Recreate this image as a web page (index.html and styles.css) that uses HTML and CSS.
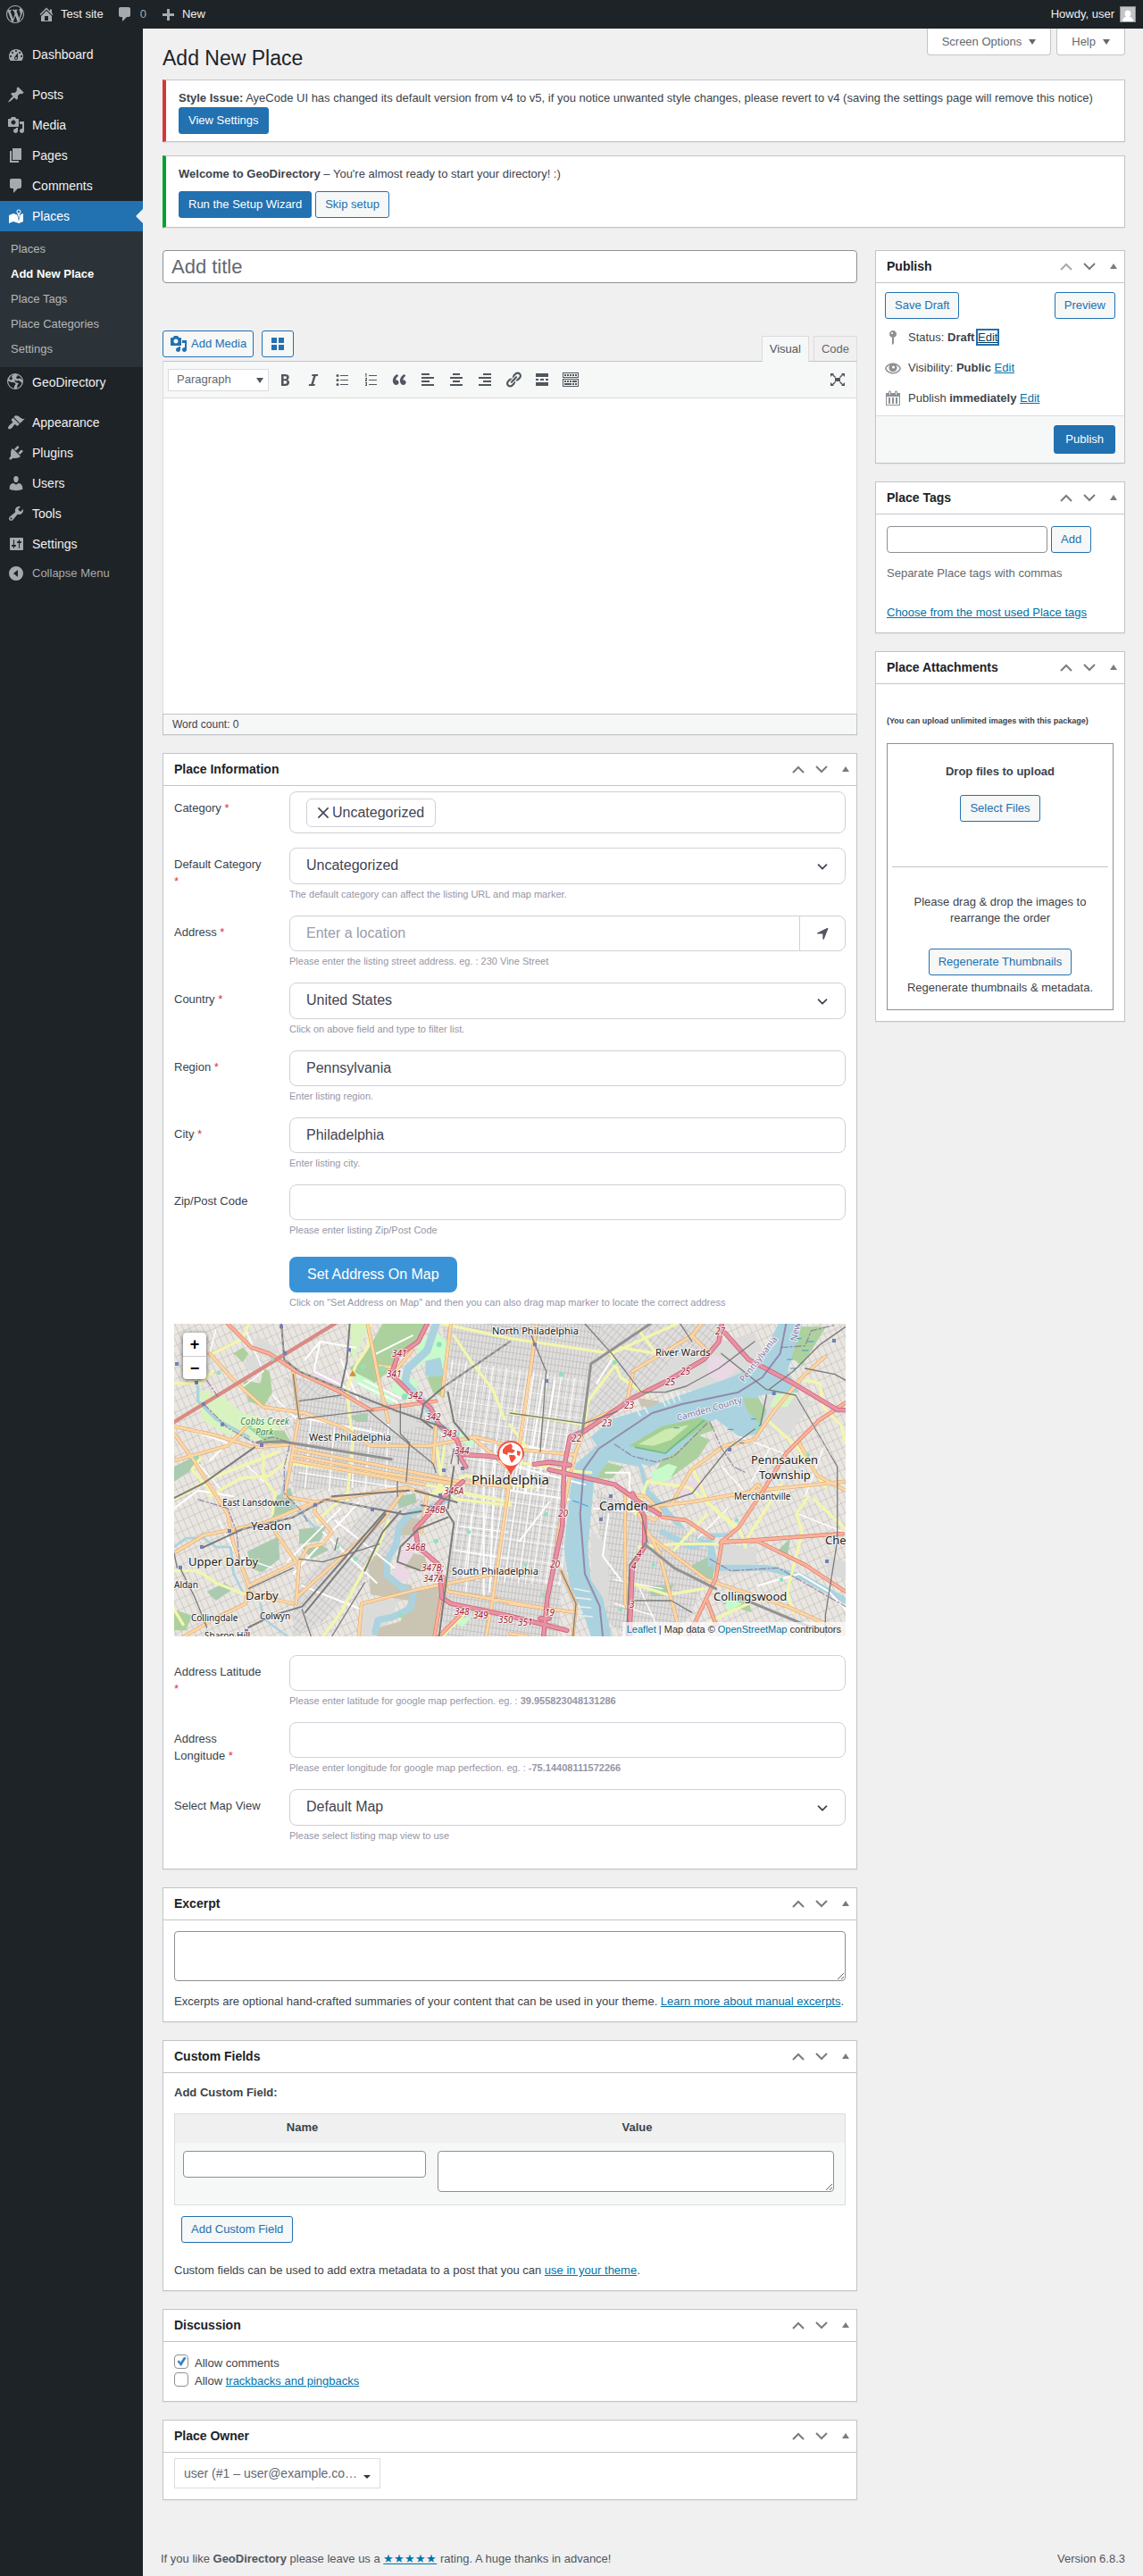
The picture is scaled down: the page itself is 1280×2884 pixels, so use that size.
FILE: index.html
```html
<!DOCTYPE html>
<html lang="en">
<head>
    <meta charset="UTF-8">
    <meta name="viewport" content="width=device-width, initial-scale=1.0">
    <title>Add New Place</title>
    <link rel="stylesheet" href="styles.css">
</head>
<body>
    <!-- Icon set -->
    <svg class="sprite" aria-hidden="true">
        <symbol id="i-wp" viewBox="0 0 20 20"><path d="M20 10c0-5.51-4.49-10-10-10C4.48 0 0 4.49 0 10c0 5.52 4.48 10 10 10 5.51 0 10-4.48 10-10zM7.78 15.37L4.37 6.22c.55-.02 1.17-.08 1.17-.08.5-.06.44-1.13-.06-1.11 0 0-1.45.11-2.37.11-.18 0-.37 0-.58-.01C4.12 2.69 6.87 1.11 10 1.11c2.33 0 4.45.87 6.05 2.34-.68-.11-1.65.39-1.65 1.58 0 .74.45 1.36.9 2.1.35.61.55 1.36.55 2.46 0 1.49-1.4 5-1.4 5l-3.03-8.37c.54-.02.82-.17.82-.17.5-.05.44-1.25-.06-1.22 0 0-1.44.12-2.38.12-.87 0-2.33-.12-2.33-.12-.5-.03-.56 1.2-.06 1.22l.92.08 1.26 3.41zM17.41 10c.24-.64.74-1.87.43-4.25.7 1.29 1.05 2.71 1.05 4.25 0 3.29-1.73 6.24-4.4 7.78.97-2.59 1.94-5.2 2.92-7.78zM6.1 18.09C3.12 16.65 1.11 13.53 1.11 10c0-1.3.23-2.48.72-3.59C3.25 10.3 4.67 14.2 6.1 18.09zm4.03-6.63l2.58 6.98c-.86.29-1.76.45-2.71.45-.79 0-1.57-.11-2.29-.33.81-2.38 1.62-4.74 2.42-7.1z"/></symbol>
        <symbol id="i-home" viewBox="0 0 20 20"><path d="M16 8.5l1.53 1.53-1.06 1.06L10 4.6l-6.47 6.49-1.06-1.06L10 2.5l4 4v-2h2v4zm-6-2.46l6 5.99V18H4v-5.97zM12 17v-5H8v5h4z"/></symbol>
        <symbol id="i-comment" viewBox="0 0 20 20"><path d="M5 2h9c1.1 0 2 .9 2 2v7c0 1.1-.9 2-2 2h-2l-5 5v-5H5c-1.1 0-2-.9-2-2V4c0-1.1.9-2 2-2z"/></symbol>
        <symbol id="i-plus" viewBox="0 0 20 20"><path d="M17 9v3h-5v5H9v-5H4V9h5V4h3v5z"/></symbol>
        <symbol id="i-dashboard" viewBox="0 0 20 20"><path fill-rule="evenodd" d="M3.76 17h12.48c1.1-1.37 1.76-3.11 1.76-5 0-4.42-3.58-8-8-8s-8 3.58-8 8c0 1.89.66 3.63 1.76 5zM10 5c.55 0 1 .45 1 1s-.45 1-1 1-1-.45-1-1 .45-1 1-1zM6 7c.55 0 1 .45 1 1s-.45 1-1 1-1-.45-1-1 .45-1 1-1zm8 0c.55 0 1 .45 1 1s-.45 1-1 1-1-.45-1-1 .45-1 1-1zm-5.37 5.55L12 8v6c0 1.1-.9 2-2 2s-2-.9-2-2c0-.57.24-1.08.63-1.45zM4 11c.55 0 1 .45 1 1s-.45 1-1 1-1-.45-1-1 .45-1 1-1zm12 0c.55 0 1 .45 1 1s-.45 1-1 1-1-.45-1-1 .45-1 1-1zm-5 3c0-.55-.45-1-1-1s-1 .45-1 1 .45 1 1 1 1-.45 1-1z"/></symbol>
        <symbol id="i-post" viewBox="0 0 20 20"><path d="M10.44 3.02l1.82-1.82 6.36 6.35-1.83 1.82c-1.05-.68-2.48-.57-3.41.36l-.75.75c-.92.93-1.04 2.35-.35 3.41l-1.83 1.82-2.41-2.41-2.8 2.79c-.42.42-3.38 2.71-3.8 2.29s1.86-3.39 2.28-3.81l2.79-2.79L4.1 9.36l1.83-1.82c1.05.69 2.48.57 3.4-.36l.75-.75c.93-.92 1.05-2.35.36-3.41z"/></symbol>
        <symbol id="i-media" viewBox="0 0 20 20"><path fill-rule="evenodd" d="M13 11V4c0-.55-.45-1-1-1h-1.67L9 1H5L3.67 3H2c-.55 0-1 .45-1 1v7c0 .55.45 1 1 1h10c.55 0 1-.45 1-1zM7 4.5c1.38 0 2.5 1.12 2.5 2.5S8.38 9.5 7 9.5 4.5 8.38 4.5 7 5.62 4.5 7 4.5zM14 6h5v10.5c0 1.38-1.12 2.5-2.5 2.5S14 17.88 14 16.5s1.12-2.5 2.5-2.5c.17 0 .34.02.5.05V9h-3V6zm-4 8.05V13h2v3.5c0 1.38-1.12 2.5-2.5 2.5S7 17.88 7 16.5 8.12 14 9.5 14c.17 0 .34.02.5.05z"/></symbol>
        <symbol id="i-page" viewBox="0 0 20 20"><path d="M6 15V2h10v13H6zm-1 1h8v2H3V5h2v11z"/></symbol>
        <symbol id="i-places" viewBox="0 0 20 20"><path fill-rule="evenodd" d="M13 13.14l1.17-5.94c.79-.43 1.33-1.25 1.33-2.2 0-1.38-1.12-2.5-2.5-2.5S10.5 3.62 10.5 5c0 .95.54 1.77 1.33 2.2zm0-9.64c.83 0 1.5.67 1.5 1.5s-.67 1.5-1.5 1.5-1.5-.67-1.5-1.5.67-1.5 1.5-1.5zm1.72 4.8L18 6.97v9L13.12 18 7 15.97l-5 2v-9l5-2 4.27 1.41 1.73 7.3z"/></symbol>
        <symbol id="i-globe" viewBox="0 0 20 20"><path fill-rule="evenodd" d="M9 0a9 9 0 1 0 0 18A9 9 0 0 0 9 0zM7 1.6L4.6 4.2l1.8 1L4.6 7.5 2.3 6.5C3 4 4.7 2.2 7 1.6zM11 1.4c3 .8 5.2 3.2 5.7 6.2L14.5 5.4 11 6.3 10 4l2-1zM1.3 8.6l3.4 1.3 3 .2 2 2-1.6 2-.4 2.6C4 16.2 1 13 1.3 8.6zM8 7l2.5 1.5L13 8l3.5 2.5c-.6 3-2.6 5.3-5.5 6l.5-3 1.5-2.5L9.5 10z"/></symbol>
        <symbol id="i-appearance" viewBox="0 0 20 20"><path d="M14.48 11.06L7.41 3.99l1.5-1.5c.5-.56 2.3-.47 3.51.32 1.21.8 1.43 1.28 2.91 2.1 1.18.64 2.45 1.26 4.45.85zm-.71.71L6.7 4.7 4.93 6.47c-.39.39-.39 1.02 0 1.41l1.06 1.06c.39.39.39 1.03 0 1.42-.6.6-1.43 1.11-2.21 1.69-.35.26-.7.53-1.01.84C1.43 14.23.4 16.08 1.4 17.07c.99 1 2.84-.03 4.18-1.36.31-.31.58-.66.85-1.02.57-.78 1.08-1.61 1.69-2.21.39-.39 1.02-.39 1.41 0l1.06 1.06c.39.39 1.02.39 1.41 0z"/></symbol>
        <symbol id="i-plugins" viewBox="0 0 20 20"><path d="M13.11 4.36L9.87 7.6 8 5.73l3.24-3.24c.35-.34 1.05-.2 1.56.32.52.51.66 1.21.31 1.55zm-8 1.77l.91-1.12 9.01 9.01-1.19.84c-.71.71-2.63 1.16-3.82 1.16H6.14L4.9 17.26c-.59.59-1.54.59-2.12 0-.59-.58-.59-1.53 0-2.12l1.24-1.24v-3.88c0-1.13.4-3.19 1.09-3.89zm7.26 3.97l3.24-3.24c.34-.35 1.04-.21 1.55.31.52.51.66 1.21.31 1.55l-3.24 3.25z"/></symbol>
        <symbol id="i-users" viewBox="0 0 20 20"><path d="M10 9.25c-2.27 0-2.73-3.44-2.73-3.44C7 4.02 7.82 2 9.97 2c2.16 0 2.98 2.02 2.71 3.81 0 0-.41 3.44-2.68 3.44zm0 2.57L12.72 10c2.39 0 4.52 2.33 4.52 4.53v2.49s-3.65 1.13-7.24 1.13c-3.65 0-7.24-1.13-7.24-1.13v-2.49c0-2.25 1.94-4.48 4.47-4.48z"/></symbol>
        <symbol id="i-tools" viewBox="0 0 20 20"><path fill-rule="evenodd" d="M16.68 9.77c-1.34 1.34-3.3 1.67-4.95.99l-5.41 6.52c-.99.99-2.59.99-3.58 0s-.99-2.59 0-3.57l6.52-5.42c-.68-1.65-.35-3.61.99-4.95 1.28-1.28 3.12-1.62 4.72-1.06l-2.89 2.89 2.82 2.82 2.86-2.87c.53 1.58.18 3.39-1.08 4.65zM3.81 16.21c.4.39 1.04.39 1.43 0 .4-.4.4-1.04 0-1.43-.39-.4-1.03-.4-1.43 0-.39.39-.39 1.03 0 1.43z"/></symbol>
        <symbol id="i-settings" viewBox="0 0 20 20"><path fill-rule="evenodd" d="M18 16V4c0-.55-.45-1-1-1H4c-.55 0-1 .45-1 1v12c0 .55.45 1 1 1h13c.55 0 1-.45 1-1zM8 11h1c.55 0 1 .45 1 1s-.45 1-1 1H8v1.5c0 .28-.22.5-.5.5s-.5-.22-.5-.5V13H6c-.55 0-1-.45-1-1s.45-1 1-1h1V5.5c0-.28.22-.5.5-.5s.5.22.5.5V11zm5-2h-1c-.55 0-1-.45-1-1s.45-1 1-1h1V5.5c0-.28.22-.5.5-.5s.5.22.5.5V7h1c.55 0 1 .45 1 1s-.45 1-1 1h-1v5.5c0 .28-.22.5-.5.5s-.5-.22-.5-.5V9z"/></symbol>
        <symbol id="i-collapse" viewBox="0 0 20 20"><path fill-rule="evenodd" d="M10 2a8 8 0 1 0 0 16 8 8 0 0 0 0-16zm2 4v8l-5-4z"/></symbol>
        <symbol id="i-grid" viewBox="0 0 20 20"><path d="M3 3h6v6H3zM11 3h6v6h-6zM3 11h6v6H3zM11 11h6v6h-6z"/></symbol>
        <symbol id="i-bold" viewBox="0 0 20 20"><path fill-rule="evenodd" d="M6 4v13h4.54c1.37 0 2.46-.33 3.26-1 .8-.66 1.2-1.58 1.2-2.77 0-.84-.17-1.51-.51-2.01s-.9-.85-1.67-1.03v-.09c.57-.1 1.02-.4 1.36-.9s.51-1.13.51-1.91c0-1.14-.39-1.98-1.17-2.5C12.75 4.26 11.5 4 9.78 4H6zm2.57 5.15V6.26h1.36c.73 0 1.27.11 1.61.32.34.22.51.58.51 1.07 0 .54-.16.92-.47 1.15s-.82.35-1.51.35h-1.5zm0 2.19h1.6c1.44 0 2.16.53 2.16 1.61 0 .6-.17 1.05-.51 1.34s-.86.43-1.57.43H8.57v-3.38z"/></symbol>
        <symbol id="i-italic" viewBox="0 0 20 20"><path d="M14.78 6h-2.13l-2.8 9h2.12l-.62 2H4.6l.62-2h2.14l2.8-9H8.03l.62-2h6.75z"/></symbol>
        <symbol id="i-ul" viewBox="0 0 20 20"><circle cx="5" cy="5.5" r="1.5"/><circle cx="5" cy="10.5" r="1.5"/><circle cx="5" cy="15.5" r="1.5"/><path d="M8 5h9v1H8zM8 10h9v1H8zM8 15h9v1H8z"/></symbol>
        <symbol id="i-ol" viewBox="0 0 20 20"><path d="M8 5h9v1H8zM8 10h9v1H8zM8 15h9v1H8zM4 3h1.5v4h-1V4H4zM4 8h2v2.5H5v.5h1v1H4V9.8h1V9H4zM4 13h2v4H4v-1h1v-.5h-.5v-1H5V14H4z"/></symbol>
        <symbol id="i-quote" viewBox="0 0 20 20"><path d="M9.49 13.22c0-.74-.2-1.38-.61-1.9-.62-.78-1.83-.88-2.53-.72-.29-1.65 1.11-3.75 2.92-4.65L7.88 4c-2.73 1.3-5.42 4.28-4.96 8.05C3.21 14.43 4.59 16 6.54 16c.85 0 1.56-.25 2.12-.75s.83-1.18.83-2.03zm8.05 0c0-.74-.2-1.38-.61-1.9-.63-.78-1.83-.88-2.53-.72-.29-1.65 1.11-3.75 2.92-4.65L15.93 4c-2.73 1.3-5.41 4.28-4.95 8.05.29 2.38 1.66 3.95 3.61 3.95.85 0 1.56-.25 2.12-.75s.83-1.18.83-2.03z"/></symbol>
        <symbol id="i-left" viewBox="0 0 20 20"><path d="M12 5V3H3v2h9zm5 4V7H3v2h14zm-5 4v-2H3v2h9zm5 4v-2H3v2h14z"/></symbol>
        <symbol id="i-center" viewBox="0 0 20 20"><path d="M14 5V3H6v2h8zm3 4V7H3v2h14zm-3 4v-2H6v2h8zm3 4v-2H3v2h14z"/></symbol>
        <symbol id="i-right" viewBox="0 0 20 20"><path d="M17 5V3H8v2h9zm0 4V7H3v2h14zm0 4v-2H8v2h9zm0 4v-2H3v2h14z"/></symbol>
        <symbol id="i-link" viewBox="0 0 20 20"><path d="M17.74 2.76c1.68 1.69 1.68 4.41 0 6.1l-1.53 1.52c-1.12 1.12-2.7 1.47-4.14 1.09l2.62-2.61.76-.77.76-.76c.84-.84.84-2.2 0-3.04-.84-.85-2.2-.85-3.04 0l-.77.76-3.38 3.38c-.37-1.44-.02-3.02 1.1-4.14l1.52-1.53c1.69-1.68 4.42-1.68 6.1 0zM8.59 13.43l5.34-5.34c.42-.42.42-1.1 0-1.52-.44-.43-1.13-.39-1.53 0l-5.33 5.34c-.42.42-.42 1.1 0 1.52.44.43 1.13.39 1.52 0zm-.76 2.29l4.14-4.15c.38 1.44.03 3.02-1.09 4.14l-1.52 1.53c-1.69 1.68-4.41 1.68-6.1 0-1.68-1.68-1.68-4.42 0-6.1l1.53-1.52c1.12-1.12 2.7-1.47 4.14-1.1l-4.14 4.15c-.85.84-.85 2.2 0 3.05.84.84 2.2.84 3.04 0z"/></symbol>
        <symbol id="i-more" viewBox="0 0 20 20"><path d="M3 3h14v4H3zM3 9h3v2H3zM8 9h4v2H8zM14 9h3v2h-3zM3 13h14v4H3z"/></symbol>
        <symbol id="i-sink" viewBox="0 0 20 20"><path fill-rule="evenodd" d="M1 2h18v6H1zM2 3v4h16V3zM3 4h2v2H3zM6 4h2v2H6zM9 4h2v2H9zM12 4h2v2h-2zM15 4h2v2h-2zM1 9h18v9H1zM2 10v7h16v-7zM3 11h2v2H3zM6 11h2v2H6zM9 11h2v2H9zM12 11h5v2h-5zM3 14h8v2H3zM12 14h2v2h-2zM15 14h2v2h-2z"/></symbol>
        <symbol id="i-full" viewBox="0 0 20 20"><path d="M7 8h6v4H7zM2 3h4L5 4l3 3-1 1-3-3-2 2zM18 3v4l-2-2-3 3-1-1 3-3-1-1zM2 17v-4l2 2 3-3 1 1-3 3 1 1zM18 17h-4l1-1-3-3 1-1 3 3 2-2z"/></symbol>
        <symbol id="i-up" viewBox="0 0 20 20"><path d="M4 14l6-6 6 6" fill="none" stroke="currentColor" stroke-width="2"/></symbol>
        <symbol id="i-down" viewBox="0 0 20 20"><path d="M4 7l6 6 6-6" fill="none" stroke="currentColor" stroke-width="2"/></symbol>
        <symbol id="i-tri-up" viewBox="0 0 20 20"><path d="M6 13l4-6 4 6z"/></symbol>
        <symbol id="i-tri-down" viewBox="0 0 20 20"><path d="M6 7h8l-4 6z"/></symbol>
        <symbol id="i-status" viewBox="0 0 20 20"><path fill-rule="evenodd" d="M14 6c0 1.86-1.28 3.41-3 3.86V16c0 1-2 2-2 2V9.86c-1.72-.45-3-2-3-3.86 0-2.21 1.79-4 4-4s4 1.79 4 4zM8 5c0 .55.45 1 1 1s1-.45 1-1-.45-1-1-1-1 .45-1 1z"/></symbol>
        <symbol id="i-eye" viewBox="0 0 20 20"><path fill-rule="evenodd" d="M10 4.5C5.500 4.500 2.200 7 1 10.500c1.200 3.500 4.500 6 9 6s7.800-2.500 9-6c-1.200-3.500-4.500-6-9-6zm0 10.700c-3.700 0-6.300-2.200-7.500-4.700C3.300 8.800 4.800 7.300 6.700 6.500A4.600 4.600 0 1 0 13.300 6.500c1.900.8 3.400 2.300 4.200 4-1.200 2.500-3.800 4.700-7.500 4.700zM10.500 7.500a1.500 1.500 0 1 1 0 3 1.500 1.500 0 0 1 0-3z"/></symbol>
        <symbol id="i-calendar" viewBox="0 0 20 20"><path fill-rule="evenodd" d="M15 4h3v14H2V4h3V3c0-.83.67-1.5 1.5-1.5S8 2.17 8 3v1h4V3c0-.83.67-1.5 1.5-1.5S15 2.17 15 3v1zM6 3v2.5c0 .28.22.5.5.5s.5-.22.5-.5V3c0-.28-.22-.5-.5-.5S6 2.72 6 3zm7 0v2.5c0 .28.22.5.5.5s.5-.22.5-.5V3c0-.28-.22-.5-.5-.5s-.5.22-.5.5zm4 14V8H3v9h14zM7 16V9H5v7h2zm4 0V9H9v7h2zm4 0V9h-2v7h2z"/></symbol>
        <symbol id="i-arrow" viewBox="0 0 20 20"><path d="M17 3.5L11.5 17.5c-.4.9-1.7.7-1.7-.4V10.7H3.4c-1.1 0-1.3-1.3-.4-1.7L15.5 3c.9-.4 1.8-.2 1.5.5z"/></symbol>
        <symbol id="i-chevron" viewBox="0 0 20 20"><path d="M5 8l5 5 5-5" fill="none" stroke="currentColor" stroke-width="2" stroke-linecap="round" stroke-linejoin="round"/></symbol>
        <symbol id="i-cross" viewBox="0 0 20 20"><path d="M3 3l14 14M17 3L3 17" fill="none" stroke="currentColor" stroke-width="2"/></symbol>
    </svg>

    <header class="adminbar">
        <a href="#"><svg class="icon"><use href="#i-wp"/></svg></a>
        <a href="#"><svg class="icon"><use href="#i-home"/></svg>Test site</a>
        <a href="#" class="count"><svg class="icon"><use href="#i-comment"/></svg>0</a>
        <a href="#"><svg class="icon"><use href="#i-plus"/></svg>New</a>
        <a href="#" class="account">Howdy, user
            <svg class="avatar" viewBox="0 0 18 18"><rect width="18" height="18" fill="#8c8f94"/><rect x="1" y="1" width="16" height="16" fill="#c3c4c7"/><path d="M9 4.5c2 0 3.5 1.6 3.5 3.7 0 1.500-.7 2.700-1.700 3.300 2.200.6 4 2.500 4.400 5.500H2.800c.4-3 2.200-4.900 4.400-5.500-1-.6-1.700-1.800-1.700-3.300C5.500 6.100 7 4.500 9 4.500z" fill="#fff"/></svg>
        </a>
    </header>

    <div class="wrap">
        <nav class="menu">
            <ul>
                <li><a href="#"><svg class="icon"><use href="#i-dashboard"/></svg>Dashboard</a></li>
                <li class="gap"><a href="#"><svg class="icon"><use href="#i-post"/></svg>Posts</a></li>
                <li><a href="#"><svg class="icon"><use href="#i-media"/></svg>Media</a></li>
                <li><a href="#"><svg class="icon"><use href="#i-page"/></svg>Pages</a></li>
                <li><a href="#"><svg class="icon"><use href="#i-comment"/></svg>Comments</a></li>
                <li class="current"><a href="#"><svg class="icon"><use href="#i-places"/></svg>Places</a>
                    <ul class="submenu">
                        <li><a href="#">Places</a></li>
                        <li><a href="#" class="active">Add New Place</a></li>
                        <li><a href="#">Place Tags</a></li>
                        <li><a href="#">Place Categories</a></li>
                        <li><a href="#">Settings</a></li>
                    </ul>
                </li>
                <li><a href="#"><svg class="icon"><use href="#i-globe"/></svg>GeoDirectory</a></li>
                <li class="gap"><a href="#"><svg class="icon"><use href="#i-appearance"/></svg>Appearance</a></li>
                <li><a href="#"><svg class="icon"><use href="#i-plugins"/></svg>Plugins</a></li>
                <li><a href="#"><svg class="icon"><use href="#i-users"/></svg>Users</a></li>
                <li><a href="#"><svg class="icon"><use href="#i-tools"/></svg>Tools</a></li>
                <li><a href="#"><svg class="icon"><use href="#i-settings"/></svg>Settings</a></li>
                <li><button type="button" class="collapse"><svg class="icon"><use href="#i-collapse"/></svg>Collapse Menu</button></li>
            </ul>
        </nav>

        <main class="content">
            <div class="page">
                <div class="heading">
                    <h1>Add New Place</h1>
                    <div class="screen-tabs">
                        <button type="button">Screen Options<svg class="icon"><use href="#i-tri-down"/></svg></button>
                        <button type="button">Help<svg class="icon"><use href="#i-tri-down"/></svg></button>
                    </div>
                </div>

                <div class="notice error">
                    <p><b>Style Issue:</b> AyeCode UI has changed its default version from v4 to v5, if you notice unwanted style changes, please revert to v4 (saving the settings page will remove this notice)</p>
                    <button type="button" class="btn primary">View Settings</button>
                </div>
                <div class="notice success">
                    <p><b>Welcome to GeoDirectory</b> – You're almost ready to start your directory! :)</p>
                    <div class="notice-actions">
                        <button type="button" class="btn primary">Run the Setup Wizard</button>
                        <button type="button" class="btn">Skip setup</button>
                    </div>
                </div>

                <div class="columns">
                    <div class="main-col">
                        <input type="text" class="title-input" placeholder="Add title" aria-label="Add title">

                        <div class="editor-tools">
                            <button type="button" class="btn media-btn"><svg class="icon"><use href="#i-media"/></svg>Add Media</button>
                            <button type="button" class="btn grid-btn" aria-label="Insert block"><svg class="icon"><use href="#i-grid"/></svg></button>
                            <div class="editor-tabs">
                                <button type="button" class="active">Visual</button>
                                <button type="button">Code</button>
                            </div>
                        </div>
                        <div class="editor">
                            <div class="toolbar">
                                <div class="format">
                                    <select aria-label="Format"><option>Paragraph</option></select>
                                    <svg class="icon"><use href="#i-tri-down"/></svg>
                                </div>
                                <button type="button" aria-label="Bold"><svg class="icon"><use href="#i-bold"/></svg></button>
                                <button type="button" aria-label="Italic"><svg class="icon"><use href="#i-italic"/></svg></button>
                                <button type="button" aria-label="Bulleted list"><svg class="icon"><use href="#i-ul"/></svg></button>
                                <button type="button" aria-label="Numbered list"><svg class="icon"><use href="#i-ol"/></svg></button>
                                <button type="button" aria-label="Blockquote"><svg class="icon"><use href="#i-quote"/></svg></button>
                                <button type="button" aria-label="Align left"><svg class="icon"><use href="#i-left"/></svg></button>
                                <button type="button" aria-label="Align center"><svg class="icon"><use href="#i-center"/></svg></button>
                                <button type="button" aria-label="Align right"><svg class="icon"><use href="#i-right"/></svg></button>
                                <button type="button" aria-label="Insert link"><svg class="icon"><use href="#i-link"/></svg></button>
                                <button type="button" aria-label="Read more tag"><svg class="icon"><use href="#i-more"/></svg></button>
                                <button type="button" aria-label="Toolbar toggle"><svg class="icon"><use href="#i-sink"/></svg></button>
                                <button type="button" class="fullscreen" aria-label="Fullscreen"><svg class="icon"><use href="#i-full"/></svg></button>
                            </div>
                            <textarea class="editor-body" aria-label="Content"></textarea>
                            <div class="word-count">Word count: 0</div>
                        </div>

                        <section class="box">
                            <div class="box-head">
                                <h2>Place Information</h2>
                                <button type="button" aria-label="Move up"><svg class="icon"><use href="#i-up"/></svg></button>
                                <button type="button" aria-label="Move down"><svg class="icon"><use href="#i-down"/></svg></button>
                                <button type="button" class="toggle" aria-label="Toggle"><svg class="icon"><use href="#i-tri-up"/></svg></button>
                            </div>
                            <div class="place-form">
                                <div class="row">
                                    <label for="category">Category <i>*</i></label>
                                    <div>
                                        <div class="tags-field">
                                            <span class="tag"><button type="button" id="category" aria-label="Remove Uncategorized"><svg class="icon"><use href="#i-cross"/></svg></button>Uncategorized</span>
                                        </div>
                                    </div>
                                </div>
                                <div class="row">
                                    <label for="default-category">Default Category <i>*</i></label>
                                    <div>
                                        <div class="select">
                                            <select id="default-category"><option>Uncategorized</option></select>
                                            <svg class="icon"><use href="#i-chevron"/></svg>
                                        </div>
                                        <small>The default category can affect the listing URL and map marker.</small>
                                    </div>
                                </div>
                                <div class="row">
                                    <label for="address">Address <i>*</i></label>
                                    <div>
                                        <div class="input-group">
                                            <input type="text" id="address" placeholder="Enter a location">
                                            <button type="button" aria-label="Use my location"><svg class="icon"><use href="#i-arrow"/></svg></button>
                                        </div>
                                        <small>Please enter the listing street address. eg. : 230 Vine Street</small>
                                    </div>
                                </div>
                                <div class="row">
                                    <label for="country">Country <i>*</i></label>
                                    <div>
                                        <div class="select">
                                            <select id="country"><option>United States</option></select>
                                            <svg class="icon"><use href="#i-chevron"/></svg>
                                        </div>
                                        <small>Click on above field and type to filter list.</small>
                                    </div>
                                </div>
                                <div class="row">
                                    <label for="region">Region <i>*</i></label>
                                    <div>
                                        <input type="text" id="region" value="Pennsylvania">
                                        <small>Enter listing region.</small>
                                    </div>
                                </div>
                                <div class="row">
                                    <label for="city">City <i>*</i></label>
                                    <div>
                                        <input type="text" id="city" value="Philadelphia">
                                        <small>Enter listing city.</small>
                                    </div>
                                </div>
                                <div class="row">
                                    <label for="zip">Zip/Post Code</label>
                                    <div>
                                        <input type="text" id="zip">
                                        <small>Please enter listing Zip/Post Code</small>
                                    </div>
                                </div>
                                <div class="row set-address">
                                    <span></span>
                                    <div>
                                        <button type="button" class="map-btn">Set Address On Map</button>
                                        <small>Click on "Set Address on Map" and then you can also drag map marker to locate the correct address</small>
                                    </div>
                                </div>

                                <div class="map">
                                    <svg class="map-canvas" viewBox="0 0 752 350" preserveAspectRatio="xMidYMid slice">
                                        <defs>
                                            <pattern id="streets" width="12" height="21" patternUnits="userSpaceOnUse" patternTransform="rotate(8)">
                                                <rect width="12" height="21" fill="#dfdedd"/><path d="M0 0h12M0 0v21" stroke="#b0aeac" stroke-width="3"/>
                                            </pattern>
                                            <pattern id="streets-white" width="46" height="62" patternUnits="userSpaceOnUse" patternTransform="rotate(8)">
                                                <path d="M0 0h46M0 0v62M24 0v62" stroke="#fff" stroke-width="4" fill="none"/>
                                            </pattern>
                                            <pattern id="streets-loose" width="20" height="34" patternUnits="userSpaceOnUse" patternTransform="rotate(-24)">
                                                <rect width="20" height="34" fill="#e9e6e1"/><path d="M0 0h20M0 0v34" stroke="#bab7b3" stroke-width="3"/>
                                            </pattern>
                                            <pattern id="streets-diag" width="15" height="26" patternUnits="userSpaceOnUse" patternTransform="rotate(40)">
                                                <rect width="15" height="26" fill="#dfdedd"/><path d="M0 0h15M0 0v26" stroke="#b5b3b0" stroke-width="3"/>
                                            </pattern>
                                        </defs>
                                        <!-- geometry is drawn at three times the label scale -->
                                        <g transform="scale(.33333)" fill="none" stroke-linejoin="round" stroke-linecap="round">
                                            <rect width="2256" height="1050" fill="url(#streets-loose)"/>
                                            <!-- city blocks -->
                                            <path d="M400 180L560 220 820 290 920 400 920 560 760 540 400 560zM900 0H1440L1390 250 1330 480 1320 560 1300 900 1290 1050H900L930 700 980 560z" fill="url(#streets)"/>
                                            <path d="M920 120L1400 190 1330 480 1310 880 940 860 940 660 1000 540z" fill="url(#streets-white)"/>
                                            <path d="M1440 0H1860L1760 130 1560 230 1390 330 1400 130zM700 570L900 600 500 1000 400 1050 400 900zM370 180l190 50-140 20z" fill="url(#streets-diag)"/>
                                            <path d="M1420 560L1600 650 1800 720 1790 860 1720 1000 1530 1050 1450 1000z" fill="url(#streets)"/>
                                            <!-- industry and open land -->
                                            <g fill="#dbdbda">
                                                <path d="M280 40l70 50-20 40-70-50zM240 100l60 20-10 50-50-20zM560 240l140 40 140 60-90 30zM1700 100l250-70 60 130-190 60-250 10zM1990 240l160 20-90 120-120-50zM1830 740l130 10-10 80-130 20zM2190 780l66 20v60l-60-20zM640 940l120-20-60 130h-80zM1400 700l60 50v200h-60zM1330 500l20 200-50 200z"/>
                                            </g>
                                            <g fill="#c9c5b2">
                                                <path d="M650 780l60 0 10 80 80 20-10 50-130-20zM800 900l100-20-20 170h-200l10-30 70-20zM760 760l80 20 20 50-90-10zM1560 250l70 10-10 30-50-10zM770 640l60 20-10 50-60 0z"/>
                                            </g>
                                            <g fill="#ead9e4">
                                                <path d="M780 720l50-20-30 80-40 60-20-10zM720 840l60-20 20 30-60 30zM1800 100l100 40-60 60-50-30zM1710 540l60-30 10 40-80 40zM470 150l90 40-10 30-80-30z"/>
                                            </g>
                                            <!-- parks -->
                                            <g fill="#d8f3c0">
                                                <path d="M90 220l80 30 60 50 90 20 50 50-10 40-90-20-100-20-80-50zM590 0h70l-60 130zM80 230l60 20-10 70-60-40zM2050 180l50 40-40 60-60 0z"/>
                                            </g>
                                            <g fill="#add19e">
                                                <path d="M590 150l60-60 50-90h150l-30 60-70 60-30 40-60 50zM850 180l50-20 10 90-40-20zM230 190l60 10 10-50 20 10 10 70-30 50-50-20zM200 100l30-20 20 20-20 30zM250 350l120 10 30 50-90-10zM1528 410l80-60 60-25 120-10 30 40-80 30-110 50-60-5zM2050 100l50-90 90 0-80 130zM1900 250l60-10 20 60-40 20zM1700 350l100 40-40 60-110 80-30-40zM1840 940l80-30 20 60zM0 960l60 20-20 50-40 0zM1430 460l80 20-40 40-60 0z"/>
                                            </g>
                                            <g fill="#aacbaf">
                                                <path d="M0 480l80-40 10 30-90 60zM330 590l60-40 20 70-80 30zM245 765l105-50 5 75-60 45-30-10zM420 690l90-10-20 50-70 10zM430 750l60-10 30 20-60 30zM110 900l60-30 30 20-60 40zM590 310l60-10 0 30-40 0zM750 580l60-10 5 30-60 20zM1740 810l80-40-10 90-60-20zM1600 880l80-5-20 40-60 0zM2030 760l40-40-10 70z"/>
                                            </g>
                                            <g fill="#c8facc">
                                                <path d="M740 170l80 20-10 70-80-30zM820 60l50-30 20 40-50 60-30 20zM880 30l50 40-20 100-70-60zM1600 500l60-30 30 10-30 50-50 0zM600 160l60 30 90 70-20 10-120-70zM960 360l50 30-10 30-40-30zM1850 920l60 20-50 30zM940 1000l60-20-30 40z"/>
                                            </g>
                                            <!-- water -->
                                            <path d="M2030 0H2110L2060 160 2100 230 1960 240 1990 300 1960 370 1900 380 1820 320 1780 340 1690 430 1600 480 1570 470 1600 560 1640 600 1720 690 1690 680 1590 590 1560 480 1460 460 1410 530 1400 650 1390 760 1400 860 1440 920 1470 1050H1400L1370 960 1330 880 1310 760 1330 560 1350 470 1420 410 1400 380 1470 320 1570 290 1700 240 1870 180 1960 140z" fill="#aad3df"/>
                                            <path d="M1528 410l110-65 130-30 30 15-100 70-60 35z" fill="#a3cf94"/>
                                            <path d="M1560 405l90-50 80-15-60 50-60 20z" fill="#cdebb0"/>
                                            <path d="M1910 250l50 0 30 40-20 50-40-40z" fill="#add19e"/>
                                            <path d="M1780 325l-130 110-100 -20" stroke="#6dbb86" stroke-width="5"/>
                                            <g stroke="#aad3df">
                                                <path d="M880 0l-30 90-65 60-10 50 60 60 30 40 20 40 60 40" stroke-width="26"/>
                                                <path d="M850 130l40-10 10 50-50 0z" stroke-width="12" fill="#aad3df"/>
                                                <path d="M935 575l-60 40-80 20-40 50-10 60-30 50 0 50 50 40 40 20-10 50-60 30-50 10-10 40" stroke-width="22"/>
                                                <path d="M80 210l0 50 60 60 110 60" stroke-width="10"/>
                                                <path d="M0 750l40-30 60 0 40 30 50 0 10 90 30 60M290 940l10 50 80 60M380 500l-20 80 70 60 50 50" stroke-width="8"/>
                                                <path d="M1640 700l100 50 60-20 20 90 170 0 120 30 146 80" stroke-width="20"/>
                                                <path d="M1760 720l40 30 0 60M1870 710l-60 0" stroke-width="14"/>
                                                <path d="M1320 780l40 0M1324 830l40 0M1340 880l50 0M1350 930l50 0M1370 980l40 0" stroke-width="10"/>
                                            </g>
                                            <path d="M1636 246l14 30M1650 240l14 30M1670 236l12 28M1690 232l10 26M1552 285l14 24M1580 280l12 20M1345 890l50 10M1350 920l50 6M1355 950l45 4M1360 980l45 4" stroke="#e6efef" stroke-width="5"/>
                                            <!-- small white streets -->
                                            <path d="M400 310l300 60M440 120l50-60 120 20M490 60l-20 100 120 60M640 190l120 60M620 200l130 64M0 620l80-60 120 20M500 700l180 170M540 660l200 160M560 620l-180 180M620 600l-220 240M430 880l200 80M1450 500l80 0 0 90M1410 620l140 10M1460 640l-20 140 60 80M1960 880l140-40 100 60 56 60M1260 600l-100 130M1150 480l230 60M1200 180l-60 380M1240 190l-60 380M1280 190l-60 370M1128 400l200 40M1128 560l200 30M1040 420l0 500M1080 400l-20 500M1420 200l50-80M680 100l120-60M560 120l60 140M60 360l120 40-60 60" stroke="#fff" stroke-width="6"/>
                                            <path d="M140 20l-20 80M240 20l60 140-80 60M20 400l140 160M240 470l60 60M150 660l60 120 120 40M330 240l80 80M460 320l-20 230M540 330l-20 230M600 350l0 200M660 350l-20 220M720 320l-10 240M420 500l400 60M960 680l160 20M940 760l180 30M1000 640l-20 260M1900 380l160 60M2000 420l-60 110M1840 480l100 110M1860 620l-100 100M2180 420l-60 160M2100 640l150 60M1560 880l60 130M1480 860l160 30M1480 940l130 40" stroke="#fff" stroke-width="4"/>
                                            <!-- secondary roads -->
                                            <g stroke="#f3f6ad">
                                                <path d="M660 0l-10 80-40 60-30 80 20 180-20 190M0 200h90l40-40M130 100l100-50 20-50M90 450l-30 40 80 90M0 590l120-70 130-50 100-40M300 430l0 90 40 50-10 70M120 580l100-60 100-10 60-50M400 470l240 30 250 50 240 50M560 590l-80 70M720 660l-30 80-60 100-70 130-60 80M880 400l20 140-50 50M910 400l-20 150 60 40 180 20M940 40l60 90 70 90 40 100M0 830l80 0 60 40 100 40M880 570l100-60 140 30M0 960l30 50M1000 950l-100 100" stroke-width="10"/>
                                                <path d="M900 0l230 50 340 50M1470 100l130-60 90-40M1560 20l60 80-120-20M1400 500l-130-10M1470 110l30 70 90 60M1490 130l-100 130-10 70M1128 300l140 20 110 20M1550 640l40-110 140 20 170 140 20 60M1740 480l60 130 90 80M1790 640l-110 120M1560 750l130-10 130 0M1128 460l170 30M2120 190l50 10 10 80 60 60 16 60M2130 580l-40 60 20 60-50 200 20 70M2000 330l90 80 100 140M2040 540l-120 190M2150 590l106 100M1528 870l130 40 120-20M1800 1000l130-60M1128 340l60 80M1128 540l80 10" stroke-width="10"/>
                                            </g>
                                            <!-- primary roads -->
                                            <g class="road-case">
                                                <g id="primary-roads">
                                                    <path d="M120 100l80 90 100 90 140 20 130 50 90 60 200 0 150-30 118 30M0 345l140 30 130 40 130-10M400 160l20 150-30 170-20 100 110 20-10 30 60 70-30 40-50 10-30 50-10 140M0 770l100-60 200-40 170-70 310-50M780 550l-80 110-290 260M0 370l60 80 120 190 20 100 50 140-10 60-120 60-120 70M400 420l260 50 300 60 168 20M400 440l300 60 260 40M400 460l440 80M0 460l180-50 80-80M250 880l160-80M250 900l60 20 90 20M650 0l40 200 30 130M930 0l-30 240M1000 380l128 110M780 550l70 20-20 130M880 340l-10 130M900 850l20 50 180 30 170 30M1128 520l-60 420-20 110M620 1050l10-110 200-50 300-60M1218 0l-20 150-40 270M340 700l70 100M690 140l60 10 50-60"/>
                                                    <path d="M1540 170l-20 100-130 60-40 100-20 80-40 200-10 90M1540 160l200-120 30-40M1740 40l60 60M1668 610l70-120 110-80 100-20 70-100 100-120 70-60M1530 620l200-20 230-40 290-30M1515 570l0 370 20 30M1560 640l70 130 70 270M1580 700l130 100 80 60 270 90 200 90M1515 570l70 10 50 50-20 30-50-20M1940 560l20-20 20 20M2100 400l60 110 96 50M1128 420l220 20M1300 830l50 110-10 110M1128 940l220 30M1128 1040l60 10"/>
                                                </g>
                                            </g>
                                            <use href="#primary-roads" class="road-fill"/>
                                            <!-- trunk roads -->
                                            <g class="trunk-case">
                                                <path id="trunk-roads" d="M180 0l80 80 60 20 90 60 150 70 100 60 220-30M905 850l-10 80-20 120M960 980l-70 70M2256 265l-90 60-110 110-80 130-80 120-60 50 410-30M1840 730l120 0 160 80 136 90M1840 735l-20 120-90 190M1640 650l80 10 90 60M1790 930l30 80"/>
                                            </g>
                                            <use href="#trunk-roads" class="trunk-fill"/>
                                            <path d="M0 330l540-330" stroke="#d98b84" stroke-width="13"/>
                                            <!-- motorways -->
                                            <g class="motorway-case">
                                                <g id="motorways">
                                                    <path d="M850 0l-30 60-70 50-20 60 60 60 70 50 30 60 60 50 20 50M980 440l80 5 60 10M970 530l-60 50-100 110 10 60 70 60 10 110 30 20 190 40 200 50M980 480l-30-50"/>
                                                    <path d="M1840 0l-10 60-50 60-120 70-120 60-160 110-50 20-20 100-6 200-50 240-20 200M1850 30l80 90 150 80 150 90h26M1210 472l50-7 70 10M1260 490l220 50 100 70 50 30M1540 570l40 80 0 100-40 60-10 240M1230 990l30 0"/>
                                                </g>
                                            </g>
                                            <use href="#motorways" class="motorway-fill"/>
                                            <!-- railways -->
                                            <g stroke="#7c7c7c" stroke-width="4">
                                                <path d="M360 0l10 120 50 40 170 70 150 60 170 60M590 0l-10 130-20 90M530 580l260-20M100 750l130-60 170-40 110-60 160 30 100 20 60-10M0 585l100-50 170-120M640 830l60-130 60-70M810 560l140 40M250 1020l80-40 100-30 280-320M440 970l270-330M750 800l10-50 60-60 100-40M750 800l80 30M830 610l80 10 30 50-50 380M1128 60l-220 150-70 60-10 50 40 30M920 230l20 100 50 60M940 480l-20 140" stroke-width="6"/>
                                                <path d="M420 260l140-20M400 170l20 150 250-30M650 290l220 180 10 30M760 270l0 100 30 30-10 130M750 530l0 50M20 820l50 100 40 100M420 790l80 10 190-60M550 720l-10 40M0 770l10 50M530 1050l110-180M430 960l30 90M250 890l150-70M940 420l-10 50M955 420l0 50"/>
                                                <path d="M1380 0l90 100 100 130 80 0 70-20 110-60 120-90M1200 40l50 120-20 270M1128 300l250 35 110-40M1838 100l150 120 100 20 140 240 0 250-40 250 0 70M2000 220l80-60 90-90 86-60M1990 240l-20 100-110 80-120 150-160 50M1570 640l20 90-60 80-10 240M1700 0l40 60M1540 930l130 0 70 40M2120 150l100 20 36 20M1300 830l50 110-10 110"/>
                                                <path d="M1600 0l-200 135-30 240M280 400l80-5 370 60M1580 740l100 80 140 70M1900 920l240 100" stroke="#929292" stroke-width="9"/>
                                            </g>
                                            <path d="M1128 60l-220 150M360 20l10 100 50 40 170 70M1480 100l90 130M2090 250l120 200M230 690l170-40 110-60 160 30" stroke="#d8d8d8" stroke-width="2" stroke-dasharray="14 12"/>
                                            <!-- borders -->
                                            <g stroke="#8c7099" stroke-opacity=".75" stroke-width="6">
                                                <path d="M2056 0l-20 100-60 80-80 50-190 40-100 30-180 120-50 70-12 150 16 200 50 110 10 100"/>
                                                <path d="M100 270l80 80 90 50 60-20 60 20-20 80 0 90 60 60 20 40M1480 405l60 40 80 20 60-20 110-110M1800 330l40 90 40 60 40 20M110 190l40 60M80 590l100 30 30 80 10 100M1800 790l70 40 160-10 226 130M2040 80l80-6 20-50 80-20" stroke-dasharray="22 8 6 8" stroke-width="4"/>
                                            </g>
                                            <path d="M2090 50h16M2110 90h20M2060 120h18M2130 60h18M2070 150h20M1680 350h16M1860 355h18M1940 320h14M1900 400h14M1340 595l20 6M1370 605l20 8" stroke="#2f9bdc" stroke-width="3"/>
                                            <g fill="#7180b4">
                                                <path d="M354 4h12v12h-12zM366 92h12v12h-12zM69 192h12v12H69zM93 264h12v12H93zM156 332h12v12h-12zM288 402h12v12h-12zM582 82h12v12h-12zM468 602h12v12h-12zM180 690h12v12h-12zM660 618h12v12h-12zM888 570h12v12h-12zM900 486h12v12h-12zM963 480h12v12h-12zM87 744h12v12H87zM15 813h12v12H15zM237 1026h12v12h-12zM3 129h12v12H3zM1206 64h12v12h-12zM1245 186h12v12h-12zM1860 417h12v12h-12zM2009 228h12v12h-12zM2211 51h12v12h-12zM1461 573h12v12h-12zM1428 651h12v12h-12zM2187 792h12v12h-12z"/>
                                            </g>
                                            <path d="M588 176l12-20 12 20z" fill="#d0903a"/>
                                            <g fill="#8fe3bb">
                                                <circle cx="255" cy="345" r="7"/><circle cx="635" cy="145" r="8"/><circle cx="700" cy="150" r="9"/><circle cx="775" cy="245" r="10"/><circle cx="890" cy="70" r="9"/><circle cx="330" cy="120" r="6"/><circle cx="150" cy="165" r="7"/><circle cx="610" cy="790" r="8"/><circle cx="760" cy="980" r="8"/><circle cx="550" cy="750" r="6"/><circle cx="70" cy="450" r="6"/><circle cx="1300" cy="170" r="8"/><circle cx="1480" cy="130" r="8"/><circle cx="1250" cy="640" r="7"/><circle cx="1180" cy="810" r="6"/><circle cx="1960" cy="350" r="8"/><circle cx="2130" cy="440" r="7"/><circle cx="1890" cy="660" r="7"/><circle cx="1500" cy="960" r="7"/><circle cx="1240" cy="910" r="7"/><circle cx="990" cy="700" r="7"/><circle cx="880" cy="730" r="8"/><circle cx="1610" cy="810" r="7"/><circle cx="2040" cy="860" r="7"/>
                                            </g>
                                        </g>
                                        <!-- place names -->
                                        <g class="map-text">
                                            <text x="151" y="131">West Philadelphia</text>
                                            <text x="356" y="12">North Philadelphia</text>
                                            <text x="539" y="36">River Wards</text>
                                            <text x="311" y="281">South Philadelphia</text>
                                            <text x="54" y="204" class="s10">East Lansdowne</text>
                                            <text x="0" y="296" class="s10">Aldan</text>
                                            <text x="19" y="333" class="s10">Collingdale</text>
                                            <text x="96" y="331" class="s10">Colwyn</text>
                                            <text x="34" y="353" class="s10">Sharon Hill</text>
                                            <text x="627" y="197" class="s10">Merchantville</text>
                                            <text x="86" y="231" class="s13">Yeadon</text>
                                            <text x="16" y="271" class="s13">Upper Darby</text>
                                            <text x="80" y="309" class="s13">Darby</text>
                                            <text x="646" y="157" class="s13">Pennsauken</text>
                                            <text x="655" y="174" class="s13">Township</text>
                                            <text x="729" y="247" class="s13">Che</text>
                                            <text x="604" y="310" class="s13">Collingswood</text>
                                            <text x="476" y="209" class="s14">Camden</text>
                                            <text x="333" y="180" class="s15">Philadelphia</text>
                                        </g>
                                        <g class="map-text park"><text x="74" y="113">Cobbs Creek</text><text x="91" y="125">Park</text></g>
                                        <g class="map-text border"><text transform="translate(564 109) rotate(-16)">Camden County</text><text transform="translate(638 66) rotate(-52)">Pennsylvania</text><text transform="translate(697 20) rotate(-78)">New</text></g>
                                        <g class="map-text exit">
                                            <text x="244" y="37">341</text><text x="238" y="60">341</text><text x="262" y="84">342</text><text x="282" y="108">342</text><text x="300" y="127">343</text><text x="314" y="146">344</text><text x="302" y="191">346A</text><text x="281" y="212">346B</text><text x="259" y="254">346B</text><text x="277" y="277">347B;</text><text x="279" y="289">347A</text><text x="314" y="326">348</text><text x="335" y="330">349</text><text x="363" y="335">350</text><text x="385" y="338">351</text><text x="415" y="327">19</text><text x="421" y="273">20</text><text x="430" y="216">20</text><text x="445" y="132">22</text><text x="479" y="115">23</text><text x="504" y="95">23</text><text x="550" y="69">25</text><text x="567" y="57">25</text><text x="606" y="12">27</text><text x="518" y="261">4</text><text x="512" y="275">4</text><text x="510" y="318">3</text>
                                        </g>
                                        <!-- marker -->
                                        <path d="M377 170c-2-9-15-17-15-24a15 15 0 0 1 30 0c0 7-13 15-15 24z" fill="#f05340"/>
                                        <circle cx="377" cy="146" r="13" fill="#fff"/>
                                        <path d="M371 137l6-3 2 3-1 3 4 2-3 3-5-1-1 3-5-2 0-4zM375 147l6 0 2 3-5 6-2-4zM384 142l4 1-1 5-3-1z" fill="#f05340"/>
                                    </svg>
                                    <div class="map-zoom">
                                        <button type="button" aria-label="Zoom in">+</button>
                                        <button type="button" aria-label="Zoom out">−</button>
                                    </div>
                                    <div class="map-credit"><a href="#">Leaflet</a> | Map data © <a href="#">OpenStreetMap</a> contributors</div>
                                </div>

                                <div class="row">
                                    <label for="lat">Address Latitude <i>*</i></label>
                                    <div>
                                        <input type="text" id="lat">
                                        <small>Please enter latitude for google map perfection. eg. : <b>39.955823048131286</b></small>
                                    </div>
                                </div>
                                <div class="row">
                                    <label for="lng">Address Longitude <i>*</i></label>
                                    <div>
                                        <input type="text" id="lng">
                                        <small>Please enter longitude for google map perfection. eg. : <b>-75.14408111572266</b></small>
                                    </div>
                                </div>
                                <div class="row">
                                    <label for="map-view">Select Map View</label>
                                    <div>
                                        <div class="select">
                                            <select id="map-view"><option>Default Map</option></select>
                                            <svg class="icon"><use href="#i-chevron"/></svg>
                                        </div>
                                        <small>Please select listing map view to use</small>
                                    </div>
                                </div>
                            </div>
                        </section>

                        <section class="box">
                            <div class="box-head">
                                <h2>Excerpt</h2>
                                <button type="button" aria-label="Move up"><svg class="icon"><use href="#i-up"/></svg></button>
                                <button type="button" aria-label="Move down"><svg class="icon"><use href="#i-down"/></svg></button>
                                <button type="button" class="toggle" aria-label="Toggle"><svg class="icon"><use href="#i-tri-up"/></svg></button>
                            </div>
                            <div class="box-body">
                                <textarea class="excerpt" aria-label="Excerpt"></textarea>
                                <p>Excerpts are optional hand-crafted summaries of your content that can be used in your theme. <a href="#">Learn more about manual excerpts</a>.</p>
                            </div>
                        </section>

                        <section class="box">
                            <div class="box-head">
                                <h2>Custom Fields</h2>
                                <button type="button" aria-label="Move up"><svg class="icon"><use href="#i-up"/></svg></button>
                                <button type="button" aria-label="Move down"><svg class="icon"><use href="#i-down"/></svg></button>
                                <button type="button" class="toggle" aria-label="Toggle"><svg class="icon"><use href="#i-tri-up"/></svg></button>
                            </div>
                            <div class="box-body custom-fields">
                                <p><b>Add Custom Field:</b></p>
                                <table>
                                    <thead>
                                        <tr><th><label for="meta-name">Name</label></th><th><label for="meta-value">Value</label></th></tr>
                                    </thead>
                                    <tbody>
                                        <tr><td><input type="text" id="meta-name"></td><td><textarea id="meta-value"></textarea></td></tr>
                                    </tbody>
                                </table>
                                <button type="button" class="btn">Add Custom Field</button>
                                <p>Custom fields can be used to add extra metadata to a post that you can <a href="#">use in your theme</a>.</p>
                            </div>
                        </section>

                        <section class="box">
                            <div class="box-head">
                                <h2>Discussion</h2>
                                <button type="button" aria-label="Move up"><svg class="icon"><use href="#i-up"/></svg></button>
                                <button type="button" aria-label="Move down"><svg class="icon"><use href="#i-down"/></svg></button>
                                <button type="button" class="toggle" aria-label="Toggle"><svg class="icon"><use href="#i-tri-up"/></svg></button>
                            </div>
                            <div class="box-body discussion">
                                <label><input type="checkbox" checked> Allow comments</label>
                                <label><input type="checkbox"> <span>Allow <a href="#">trackbacks and pingbacks</a></span></label>
                            </div>
                        </section>

                        <section class="box">
                            <div class="box-head">
                                <h2>Place Owner</h2>
                                <button type="button" aria-label="Move up"><svg class="icon"><use href="#i-up"/></svg></button>
                                <button type="button" aria-label="Move down"><svg class="icon"><use href="#i-down"/></svg></button>
                                <button type="button" class="toggle" aria-label="Toggle"><svg class="icon"><use href="#i-tri-up"/></svg></button>
                            </div>
                            <div class="box-body owner">
                                <div class="owner-select">
                                    <select aria-label="Place Owner"><option>user (#1 – user@example.co…</option></select>
                                </div>
                            </div>
                        </section>
                    </div>

                    <aside class="side-col">
                        <section class="box">
                            <div class="box-head">
                                <h2>Publish</h2>
                                <button type="button" aria-label="Move up" disabled><svg class="icon"><use href="#i-up"/></svg></button>
                                <button type="button" aria-label="Move down"><svg class="icon"><use href="#i-down"/></svg></button>
                                <button type="button" class="toggle" aria-label="Toggle"><svg class="icon"><use href="#i-tri-up"/></svg></button>
                            </div>
                            <div class="publish-top">
                                <button type="button" class="btn">Save Draft</button>
                                <button type="button" class="btn">Preview</button>
                            </div>
                            <ul class="publish-info">
                                <li><svg class="icon"><use href="#i-status"/></svg><span>Status: <b>Draft</b> <a href="#" class="focused">Edit</a></span></li>
                                <li><svg class="icon"><use href="#i-eye"/></svg><span>Visibility: <b>Public</b> <a href="#">Edit</a></span></li>
                                <li><svg class="icon"><use href="#i-calendar"/></svg><span>Publish <b>immediately</b> <a href="#">Edit</a></span></li>
                            </ul>
                            <div class="publish-actions">
                                <button type="button" class="btn primary large">Publish</button>
                            </div>
                        </section>

                        <section class="box">
                            <div class="box-head">
                                <h2>Place Tags</h2>
                                <button type="button" aria-label="Move up"><svg class="icon"><use href="#i-up"/></svg></button>
                                <button type="button" aria-label="Move down"><svg class="icon"><use href="#i-down"/></svg></button>
                                <button type="button" class="toggle" aria-label="Toggle"><svg class="icon"><use href="#i-tri-up"/></svg></button>
                            </div>
                            <div class="box-body place-tags">
                                <div class="tag-form">
                                    <input type="text" aria-label="Add New Place Tag">
                                    <button type="button" class="btn">Add</button>
                                </div>
                                <p class="hint">Separate Place tags with commas</p>
                                <p><a href="#">Choose from the most used Place tags</a></p>
                            </div>
                        </section>

                        <section class="box">
                            <div class="box-head">
                                <h2>Place Attachments</h2>
                                <button type="button" aria-label="Move up"><svg class="icon"><use href="#i-up"/></svg></button>
                                <button type="button" aria-label="Move down"><svg class="icon"><use href="#i-down"/></svg></button>
                                <button type="button" class="toggle" aria-label="Toggle"><svg class="icon"><use href="#i-tri-up"/></svg></button>
                            </div>
                            <div class="box-body attachments">
                                <h5>(You can upload unlimited images with this package)</h5>
                                <div class="dropzone">
                                    <p><b>Drop files to upload</b></p>
                                    <button type="button" class="btn">Select Files</button>
                                    <hr>
                                    <p class="drag-hint">Please drag &amp; drop the images to rearrange the order</p>
                                    <button type="button" class="btn">Regenerate Thumbnails</button>
                                    <p class="regen-hint">Regenerate thumbnails &amp; metadata.</p>
                                </div>
                            </div>
                        </section>
                    </aside>
                </div>
            </div>

            <footer class="footer">
                <p>If you like <b>GeoDirectory</b> please leave us a <a href="#">★★★★★</a> rating. A huge thanks in advance!</p>
                <p>Version 6.8.3</p>
            </footer>
        </main>
    </div>
</body>
</html>
```

FILE: styles.css
```css
* {
    box-sizing: border-box;
}
body {
    margin: 0;
    background: #f0f0f1;
    color: #3c434a;
    font-family: "Liberation Sans", Arial, sans-serif;
    font-size: 13px;
    line-height: 20px;
}
h1, h2, h5, p, ul {
    margin: 0;
    padding: 0;
}
ul {
    list-style: none;
}
a {
    color: #0073aa;
}
button, input, select, textarea {
    font: inherit;
    color: inherit;
    margin: 0;
}
button {
    background: none;
    border: none;
    padding: 0;
    cursor: pointer;
}
select {
    appearance: none;
}
.sprite {
    display: none;
}
.icon {
    width: 20px;
    height: 20px;
    flex: none;
    fill: currentColor;
}

/* Top bar */
.adminbar {
    display: flex;
    height: 32px;
    background: #1d2327;
}
.adminbar a {
    display: flex;
    align-items: center;
    gap: 6px;
    padding: 0 7px;
    color: #f0f0f1;
    text-decoration: none;
}
.adminbar a:first-child {
    padding-right: 8px;
}
.adminbar .icon {
    color: #a7aaad;
}
.adminbar .count {
    gap: 7px;
    color: #a7aaad;
}
.adminbar .account {
    margin-left: auto;
    padding-right: 8px;
}
.avatar {
    width: 18px;
    height: 18px;
}

/* Side menu */
.wrap {
    display: flex;
}
.menu {
    width: 160px;
    flex: none;
    padding-top: 12px;
    background: #1d2327;
    font-size: 14px;
}
.menu a, .collapse {
    display: flex;
    align-items: center;
    gap: 8px;
    height: 34px;
    padding: 0 8px;
    color: #f0f0f1;
    text-decoration: none;
}
.menu .icon {
    color: #a7aaad;
}
.menu .gap {
    margin-top: 11px;
}
.menu .current > a {
    position: relative;
    background: #2271b1;
    color: #fff;
}
.menu .current > a .icon {
    color: #fff;
}
.menu .current > a::after {
    content: "";
    position: absolute;
    right: 0;
    border: 8px solid transparent;
    border-right-color: #f0f0f1;
    border-left: none;
}
.submenu {
    padding: 6px 0;
    background: #2c3338;
    font-size: 13px;
}
.submenu a {
    height: 28px;
    padding: 0 12px;
    color: #b4b7ba;
}
.submenu .active {
    color: #fff;
    font-weight: bold;
}
.menu .collapse {
    height: 32px;
    color: #a7aaad;
    font-size: 13px;
}

/* Page */
.content {
    flex: 1;
    min-width: 0;
    padding: 0 20px;
}
.page {
    margin-left: 2px;
}
.heading {
    display: flex;
    justify-content: space-between;
    align-items: flex-start;
    margin-bottom: 9px;
}
h1 {
    padding-top: 18px;
    color: #1d2327;
    font-size: 23px;
    font-weight: normal;
    line-height: 30px;
}
.screen-tabs {
    display: flex;
    gap: 6px;
}
.screen-tabs button {
    display: flex;
    align-items: center;
    gap: 2px;
    height: 30px;
    padding: 0 10px 0 16px;
    background: #fff;
    border: 1px solid #c3c4c7;
    border-top: none;
    border-radius: 0 0 4px 4px;
    color: #646970;
}
.btn {
    height: 30px;
    padding: 0 10px;
    background: #f6f7f7;
    border: 1px solid #2271b1;
    border-radius: 3px;
    color: #2271b1;
    white-space: nowrap;
}
.btn.primary {
    background: #2271b1;
    color: #fff;
}
.btn.large {
    height: 32px;
    padding: 0 12px;
}
.notice {
    margin-bottom: 15px;
    padding: 10px 12px 8px 14px;
    background: #fff;
    border: 1px solid #c3c4c7;
    border-left: 4px solid #d63638;
    box-shadow: 0 1px 1px rgba(0, 0, 0, 0.04);
}
.notice.success {
    margin-bottom: 25px;
    padding-bottom: 10px;
    border-left-color: #00a32a;
}
.notice-actions {
    display: flex;
    gap: 4px;
    margin-top: 9px;
}
.columns {
    display: flex;
    gap: 20px;
    align-items: flex-start;
}
.main-col {
    flex: 1;
    min-width: 0;
}
.side-col {
    width: 280px;
    flex: none;
}

/* Editor */
.title-input {
    display: block;
    width: 100%;
    height: 37px;
    padding: 0 9px;
    border: 1px solid #8c8f94;
    border-radius: 4px;
    font-size: 22px;
}
.title-input::placeholder {
    color: #646970;
}
.editor-tools {
    display: flex;
    align-items: flex-start;
    height: 34px;
    margin-top: 53px;
}
.media-btn {
    display: flex;
    align-items: center;
    gap: 4px;
    padding: 0 7px;
}
.grid-btn {
    display: flex;
    align-items: center;
    margin-left: 9px;
    padding: 0 7px;
}
.editor-tabs {
    display: flex;
    align-self: flex-end;
    gap: 5px;
    margin-left: auto;
}
.editor-tabs button {
    height: 28px;
    padding: 0 8px;
    border: 1px solid #dcdcde;
    border-bottom: none;
    color: #646970;
}
.editor-tabs .active {
    height: 29px;
    margin-bottom: -1px;
    background: #f6f7f7;
    color: #50575e;
    z-index: 1;
}
.editor {
    margin-bottom: 20px;
    background: #fff;
    border: 1px solid #dcdcde;
    border-top-color: #c3c4c7;
    border-bottom: none;
}
.toolbar {
    display: flex;
    align-items: center;
    gap: 4px;
    height: 41px;
    padding: 0 5px;
    background: #f6f7f7;
    border-bottom: 1px solid #dcdcde;
    color: #50575e;
}
.toolbar button {
    width: 28px;
    height: 28px;
    padding: 4px;
}
.toolbar .fullscreen {
    margin-left: auto;
    margin-right: 2px;
}
.format {
    position: relative;
    width: 113px;
    height: 25px;
}
.format select {
    width: 100%;
    height: 100%;
    padding: 0 9px;
    background: #fff;
    border: 1px solid #dcdcde;
    border-radius: 0;
    color: #646970;
}
.format .icon {
    position: absolute;
    right: 0;
    top: 3px;
    pointer-events: none;
}
.editor-body {
    display: block;
    width: 100%;
    height: 353px;
    border: none;
    resize: none;
}
.word-count {
    margin: 0 -1px;
    padding: 1px 10px;
    background: #f6f7f7;
    border: 1px solid #c3c4c7;
    font-size: 12px;
    box-shadow: 0 1px 1px rgba(0, 0, 0, 0.04);
}

/* Boxes */
.box {
    margin-bottom: 20px;
    background: #fff;
    border: 1px solid #c3c4c7;
    box-shadow: 0 1px 1px rgba(0, 0, 0, 0.04);
}
.box-head {
    display: flex;
    align-items: center;
    height: 36px;
    padding: 0 0 1px 12px;
    border-bottom: 1px solid #c3c4c7;
    color: #787c82;
}
.box-head h2 {
    margin-right: auto;
    color: #1d2327;
    font-size: 14px;
    line-height: 20px;
}
.box-head button {
    width: 26px;
    height: 20px;
    padding: 0 3px;
}
.box-head button:disabled {
    color: #a7aaad;
}
.box-head .toggle {
    margin-left: 1px;
    margin-right: -1px;
}
.box-body {
    padding: 12px;
}

/* Place information */
.place-form {
    padding: 6px 12px 13px;
}
.row {
    display: grid;
    grid-template-columns: 105px 1fr;
    column-gap: 24px;
    margin-bottom: 15px;
}
.row:first-child {
    margin-bottom: 16px;
}
.row > label {
    padding-top: 9px;
    line-height: 19px;
}
.row i {
    color: #dc3545;
    font-style: normal;
}
.row input, .row select {
    display: block;
    width: 100%;
    height: 40px;
    padding: 0 18px;
    background: #fff;
    border: 1px solid #d0d0d9;
    border-radius: 8px;
    color: #444452;
    font-size: 16px;
}
.row input::placeholder {
    color: #9c9cab;
}
.row small {
    display: block;
    margin-top: 3px;
    color: #9696a6;
    font-size: 11px;
    line-height: 17px;
}
.select {
    position: relative;
}
.row .select select {
    height: 41px;
    padding-bottom: 1px;
}
.select .icon {
    position: absolute;
    right: 17px;
    top: 11px;
    color: #444452;
    width: 18px;
    pointer-events: none;
}
.tags-field {
    display: flex;
    height: 47px;
    padding: 7px 18px;
    border: 1px solid #d0d0d9;
    border-radius: 8px;
}
.tag {
    display: flex;
    align-items: center;
    gap: 2px;
    height: 32px;
    padding: 0 12px 0 10px;
    border: 1px solid #d0d0d9;
    border-radius: 6px;
    color: #444452;
    font-size: 16px;
}
.tag .icon {
    display: block;
    width: 16px;
    height: 16px;
}
.input-group {
    display: flex;
}
.input-group input {
    flex: 1;
    border-radius: 8px 0 0 8px;
}
.input-group button {
    display: flex;
    align-items: center;
    justify-content: center;
    width: 52px;
    margin-left: -1px;
    border: 1px solid #d0d0d9;
    border-radius: 0 8px 8px 0;
    color: #555562;
}
.input-group .icon {
    width: 17px;
}
.set-address {
    padding-top: 6px;
}
.map-btn {
    display: block;
    height: 40px;
    padding: 0 20px;
    background: #3b93d7;
    border-radius: 8px;
    color: #fff;
    font-size: 16px;
}

/* Map */
.map {
    position: relative;
    height: 350px;
    margin-bottom: 21px;
    overflow: hidden;
}
.map-canvas {
    display: block;
    width: 100%;
    height: 100%;
}
.road-case {
    stroke: #dda46a;
    stroke-width: 12px;
}
.road-fill {
    stroke: #fcd6a4;
    stroke-width: 9px;
}
.trunk-case {
    stroke: #e0785f;
    stroke-width: 13px;
}
.trunk-fill {
    stroke: #f9b29c;
    stroke-width: 9px;
}
.motorway-case {
    stroke: #cf5f7b;
    stroke-width: 16px;
}
.motorway-fill {
    stroke: #e892a2;
    stroke-width: 11px;
}
.map-text {
    fill: #222;
    stroke: rgba(255, 255, 255, 0.7);
    stroke-width: 2px;
    paint-order: stroke;
    font-family: "Noto Sans", sans-serif;
    font-size: 11px;
}
.map-text .s10 {
    font-size: 10px;
}
.map-text .s13 {
    font-size: 13px;
}
.map-text .s14 {
    font-size: 14px;
}
.map-text .s15 {
    font-size: 15px;
}
.map-text.park {
    fill: #2e8b3d;
    font-style: italic;
    font-size: 10px;
}
.map-text.border {
    fill: #8d719a;
    font-size: 10px;
}
.map-text.exit {
    fill: #a01c32;
    font-style: italic;
    font-size: 10px;
}
.map-zoom {
    position: absolute;
    left: 10px;
    top: 10px;
    width: 26px;
    background: #fff;
    border-radius: 4px;
    box-shadow: 0 1px 5px rgba(0, 0, 0, 0.65);
}
.map-zoom button {
    display: block;
    width: 26px;
    height: 26px;
    color: #000;
    font-size: 18px;
    font-weight: bold;
    line-height: 24px;
}
.map-zoom button + button {
    border-top: 1px solid #ccc;
}
.map-credit {
    position: absolute;
    right: 0;
    bottom: 0;
    padding: 0 5px;
    background: rgba(255, 255, 255, 0.7);
    color: #333;
    font-size: 11px;
    line-height: 16px;
}
.map-credit a {
    color: #0078a8;
    text-decoration: none;
}

/* Lower boxes */
.box textarea, .custom-fields input, .tag-form input {
    display: block;
    border: 1px solid #8c8f94;
    border-radius: 4px;
    background: #fff;
}
.excerpt {
    width: 100%;
    height: 56px;
    margin-bottom: 13px;
}
.custom-fields table {
    width: 100%;
    margin: 13px 0 12px;
    background: #f6f7f7;
    border: 1px solid #dcdcde;
    border-spacing: 0;
    table-layout: fixed;
}
.custom-fields th {
    height: 32px;
    padding: 0 0 2px;
    background: #f0f0f1;
}
.custom-fields th:first-child {
    width: 38%;
}
.custom-fields td {
    padding: 9px 4px 14px 9px;
    vertical-align: top;
}
.custom-fields td + td {
    padding-right: 12px;
}
.custom-fields td input {
    width: 100%;
    height: 30px;
}
.custom-fields td textarea {
    width: 100%;
    height: 46px;
}
.custom-fields .btn {
    display: block;
    margin: 0 0 21px 8px;
}
.discussion {
    padding: 14px 12px 12px;
}
.discussion label {
    display: flex;
    align-items: flex-start;
    gap: 7px;
}
.discussion input {
    appearance: none;
    width: 16px;
    height: 16px;
    border: 1px solid #8c8f94;
    border-radius: 4px;
}
.discussion input:checked::before {
    content: "";
    display: block;
    height: 14px;
    background: #3582c4;
    clip-path: polygon(18% 48%, 32% 38%, 44% 56%, 72% 12%, 90% 20%, 48% 88%);
}
.owner {
    padding-top: 6px;
}
.owner-select {
    position: relative;
    width: 231px;
}
.owner-select::after {
    content: "";
    position: absolute;
    right: 11px;
    top: 19px;
    border: 4px solid transparent;
    border-top-color: #32373c;
    border-bottom: none;
    pointer-events: none;
}
.owner-select select {
    display: block;
    width: 100%;
    height: 34px;
    padding: 0 10px;
    background: #fff;
    border: 1px solid #dcdcde;
    border-radius: 0;
    color: #646970;
    font-size: 14px;
}

/* Side column */
.publish-top {
    display: flex;
    justify-content: space-between;
    padding: 10px 10px 4px;
}
.publish-info {
    padding-bottom: 2px;
}
.publish-info li {
    display: flex;
    align-items: center;
    gap: 7px;
    height: 34px;
    padding: 0 9px;
}
.publish-info .icon {
    color: #8c8f94;
}
.publish-info .focused {
    color: #043959;
    outline: 2px solid #2271b1;
}
.publish-actions {
    display: flex;
    justify-content: flex-end;
    padding: 10px;
    background: #f6f7f7;
    border-top: 1px solid #dcdcde;
}
.place-tags {
    padding-top: 13px;
}
.tag-form {
    display: flex;
    gap: 4px;
}
.tag-form input {
    width: 180px;
    height: 30px;
}
.hint {
    margin: 13px 0 24px;
    color: #646970;
}
.attachments {
    padding-top: 31px;
}
.attachments h5 {
    margin-bottom: 15px;
    font-size: 9px;
}
.dropzone {
    padding: 21px 5px 14px;
    border: 1px solid #8c8f94;
    text-align: center;
}
.dropzone .btn {
    margin-top: 16px;
}
.dropzone hr {
    margin: 50px 0 30px;
    border: none;
    border-top: 1px solid #c3c4c7;
}
.drag-hint {
    padding: 0 20px;
    line-height: 18px;
}
.dropzone .drag-hint + .btn {
    margin-top: 25px;
}
.regen-hint {
    margin-top: 4px;
}
.footer {
    display: flex;
    justify-content: space-between;
    margin-top: 56px;
    padding-bottom: 10px;
    color: #50575e;
}
.main-col .box:last-child {
    margin-bottom: 0;
}
```
